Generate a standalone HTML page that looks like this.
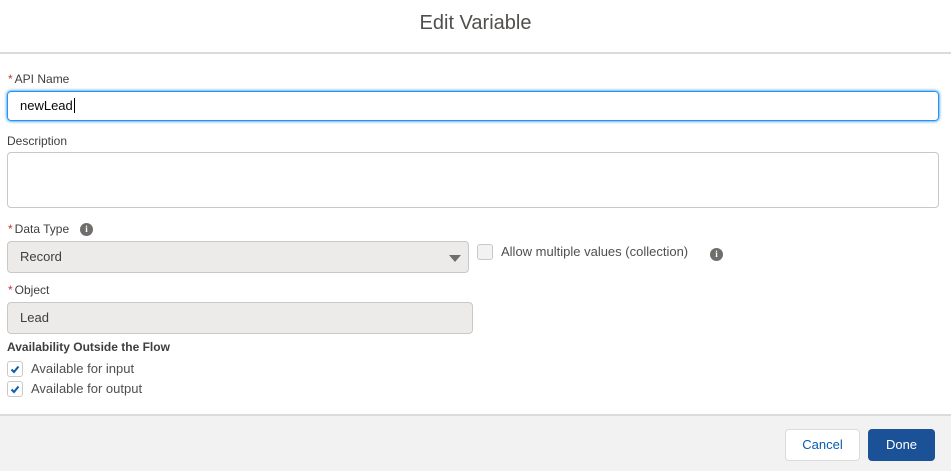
<!DOCTYPE html>
<html><head><style>
*{box-sizing:border-box;margin:0;padding:0}
body{width:951px;height:471px;background:#fff;font-family:"Liberation Sans",sans-serif;color:#3e3e3c;position:relative;overflow:hidden}
.a{position:absolute}
.lbl{font-size:12px;color:#3e3e3c}
.req{color:#c23934;margin-right:2px}
.box{border:1px solid #c9c9c9;border-radius:4px}
.info{width:13px;height:13px;border-radius:50%;background:#706e6b;color:#fff;font-size:9px;font-weight:bold;text-align:center;line-height:13px;font-family:"Liberation Serif",serif}
.cb{width:16px;height:16px;border:1px solid #c9c9c9;border-radius:3px;background:#fff}
</style></head><body>
<div class="a" style="left:0;top:12px;width:951px;text-align:center;font-size:20px;color:#514f4d">Edit Variable</div>
<div class="a" style="left:0;top:52px;width:951px;height:2px;background:#dddbda"></div>

<div class="a lbl" style="left:8px;top:72px"><span class="req">*</span>API Name</div>
<div class="a" style="left:7px;top:91px;width:932px;height:30px;border:1px solid #1b96ff;border-radius:4px;box-shadow:0 0 3px #0070d2"></div>
<div class="a" style="left:20px;top:98px;font-size:13px;color:#080707">newLead<span style="border-left:1px solid #000;margin-left:1px"></span></div>

<div class="a lbl" style="left:7px;top:134px">Description</div>
<div class="a box" style="left:7px;top:152px;width:932px;height:56px"></div>

<div class="a lbl" style="left:8px;top:222px"><span class="req">*</span>Data Type</div>
<div class="a info" style="left:80px;top:223px">i</div>
<div class="a box" style="left:7px;top:241px;width:462px;height:32px;background:#ecebea"></div>
<div class="a" style="left:20px;top:249px;font-size:13px;color:#3e3e3c">Record</div>
<div class="a" style="left:449px;top:255px;width:0;height:0;border-left:6px solid transparent;border-right:6px solid transparent;border-top:7px solid #706e6b"></div>
<div class="a cb" style="left:477px;top:244px;background:#f3f2f2"></div>
<div class="a" style="left:501px;top:244px;font-size:13px;color:#514f4d">Allow multiple values (collection)</div>
<div class="a info" style="left:710px;top:248px">i</div>

<div class="a lbl" style="left:8px;top:283px"><span class="req">*</span>Object</div>
<div class="a box" style="left:7px;top:302px;width:466px;height:32px;background:#ecebea"></div>
<div class="a" style="left:20px;top:310px;font-size:13px;color:#3e3e3c">Lead</div>

<div class="a" style="left:7px;top:340px;font-size:12px;font-weight:bold;color:#3e3e3c">Availability Outside the Flow</div>
<div class="a cb" style="left:7px;top:361px"></div>
<svg class="a" style="left:7px;top:361px" width="16" height="16"><path d="M4.5 8.5 L7 11 L11.5 5.5" stroke="#0b5cab" stroke-width="2" fill="none"/></svg>
<div class="a" style="left:31px;top:361px;font-size:13px;color:#514f4d">Available for input</div>
<div class="a cb" style="left:7px;top:381px"></div>
<svg class="a" style="left:7px;top:381px" width="16" height="16"><path d="M4.5 8.5 L7 11 L11.5 5.5" stroke="#0b5cab" stroke-width="2" fill="none"/></svg>
<div class="a" style="left:31px;top:381px;font-size:13px;color:#514f4d">Available for output</div>

<div class="a" style="left:0;top:414px;width:951px;height:57px;background:#f3f2f2;border-top:2px solid #dddbda"></div>
<div class="a" style="left:785px;top:429px;width:75px;height:32px;background:#fff;border:1px solid #dddbda;border-radius:4px;text-align:center;line-height:30px;font-size:13px;color:#0b5cab">Cancel</div>
<div class="a" style="left:868px;top:429px;width:67px;height:32px;background:#1b5297;border-radius:4px;text-align:center;line-height:32px;font-size:13px;color:#fff">Done</div>
</body></html>
